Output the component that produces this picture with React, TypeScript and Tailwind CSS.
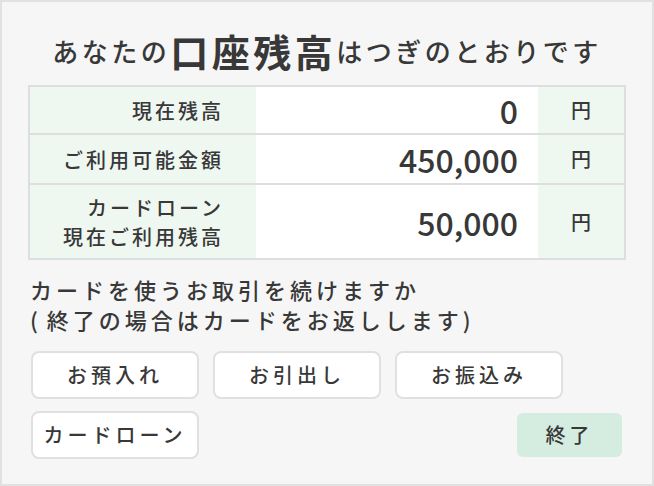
import React from 'react';

const rows = [
  { label: ['現在残高'], value: '0' },
  { label: ['ご利用可能金額'], value: '450,000' },
  { label: ['カードローン', '現在ご利用残高'], value: '50,000' },
];

const actions = ['お預入れ', 'お引出し', 'お振込み'];

const App: React.FC = () => {
  return (
    <div
      className="w-[654px] h-[486px] box-border border-2 border-[#e1e1e1] bg-[#f6f6f6] px-[26px] text-[#383838] font-medium"
      style={{ fontFamily: '"Noto Sans CJK JP", "Noto Sans", sans-serif' }}
    >
      {/* Title */}
      <h1 className="h-[83px] flex items-center justify-center pt-[14px] tracking-[3.5px] text-[26px] font-medium leading-none">
        <span>あなたの</span>
        <span className="text-[38px] font-bold">口座残高</span>
        <span>はつぎのとおりです</span>
      </h1>

      {/* Balance table */}
      <div className="border-2 border-[#dedede] bg-white">
        {rows.map((row, i) => (
          <div
            key={i}
            className={`flex ${i > 0 ? 'border-t-2 border-[#dedede]' : ''} ${
              i === 0 ? 'h-[46px]' : i === 1 ? 'h-[50px]' : 'h-[75px]'
            }`}
          >
            <div className="w-[226px] bg-[#eef7f0] flex flex-col items-end justify-center pr-[32px] text-[20px] leading-[29px] tracking-[3px]">
              {row.label.map(l => (
                <span key={l}>{l}</span>
              ))}
            </div>
            <div className="flex-1 flex items-center justify-end pr-[20px] text-[32px] leading-none bg-white">
              {row.value}
            </div>
            <div className="w-[86px] bg-[#eef7f0] flex items-center justify-center text-[20px]">円</div>
          </div>
        ))}
      </div>

      {/* Prompt */}
      <p className="mt-[14px] pl-[2px] text-[22px] leading-[30px] tracking-[4px]">
        カードを使うお取引を続けますか
        <br />
        (<span className="ml-[5px]">終了の場合はカードをお返しします</span>)
      </p>

      {/* Buttons */}
      <div className="mt-[17px] pl-[3px] flex flex-col gap-[12px]">
        <div className="flex gap-[14px]">
          {actions.map(a => (
            <button
              key={a}
              className="w-[168px] h-[48px] rounded-[8px] border-2 border-[#e0e0e0] bg-white text-[20px] tracking-[4px]"
            >
              {a}
            </button>
          ))}
        </div>
        <div className="flex items-center justify-between pr-[4px]">
          <button className="w-[168px] h-[48px] rounded-[8px] border-2 border-[#e0e0e0] bg-white text-[20px] tracking-[4px]">
            カードローン
          </button>
          <button className="w-[105px] h-[44px] rounded-[6px] bg-[#d5ece0] text-[20px] tracking-[4px]">
            終了
          </button>
        </div>
      </div>
    </div>
  );
};

export default App;
